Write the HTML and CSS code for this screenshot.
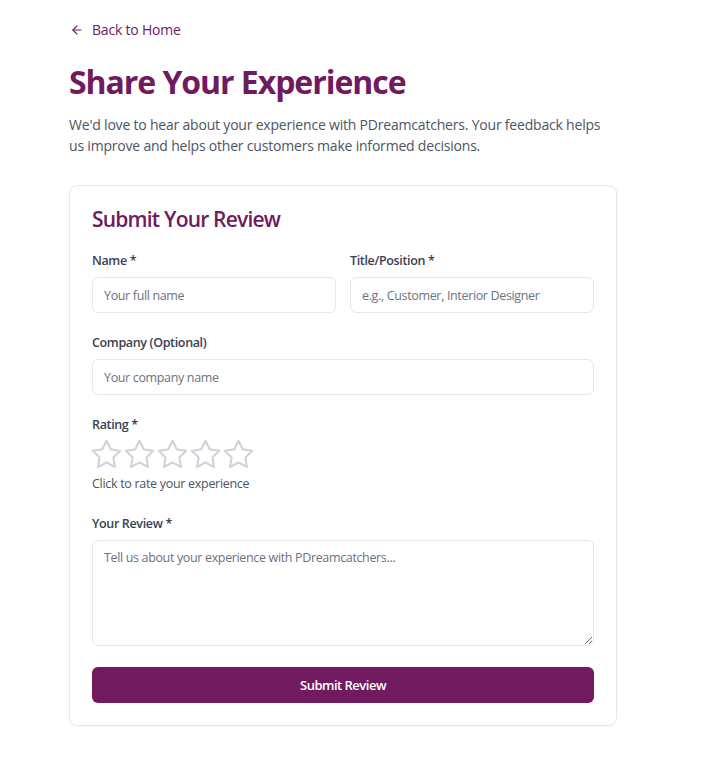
FILE: index.html
```html
<!DOCTYPE html>
<html lang="en">
<head>
<meta charset="utf-8">
<title>Share Your Experience</title>
<link rel="stylesheet" href="styles.css">
</head>
<body>
<main class="page">
  <a class="back-link" href="#">
    <svg class="back-icon" viewBox="0 0 24 24" width="14" height="14" fill="none" stroke="currentColor" stroke-width="2" stroke-linecap="round" stroke-linejoin="round"><path d="M19 12H5"/><path d="M12 19l-7-7 7-7"/></svg>
    <span>Back to Home</span>
  </a>
  <h1 class="page-title">Share Your Experience</h1>
  <p class="intro">We'd love to hear about your experience with PDreamcatchers. Your feedback helps us improve and helps other customers make informed decisions.</p>

  <section class="card">
    <h2 class="card-title">Submit Your Review</h2>
    <form class="form">
      <div class="row-2">
        <div class="field">
          <label class="label">Name *</label>
          <input class="input" type="text" placeholder="Your full name">
        </div>
        <div class="field">
          <label class="label">Title/Position *</label>
          <input class="input" type="text" placeholder="e.g., Customer, Interior Designer">
        </div>
      </div>
      <div class="field">
        <label class="label">Company (Optional)</label>
        <input class="input" type="text" placeholder="Your company name">
      </div>
      <div class="field">
        <label class="label">Rating *</label>
        <div class="stars">
          <svg class="star" viewBox="0 0 24 24"><path d="M12 2l3.09 6.26L22 9.27l-5 4.87 1.18 6.88L12 17.770l-6.18 3.25L7 14.14 2 9.27l6.91-1.01L12 2z"/></svg>
          <svg class="star" viewBox="0 0 24 24"><path d="M12 2l3.09 6.26L22 9.27l-5 4.87 1.18 6.88L12 17.77l-6.18 3.25L7 14.14 2 9.27l6.91-1.01L12 2z"/></svg>
          <svg class="star" viewBox="0 0 24 24"><path d="M12 2l3.09 6.26L22 9.27l-5 4.87 1.18 6.88L12 17.77l-6.18 3.25L7 14.14 2 9.27l6.91-1.01L12 2z"/></svg>
          <svg class="star" viewBox="0 0 24 24"><path d="M12 2l3.09 6.26L22 9.27l-5 4.87 1.18 6.88L12 17.77l-6.18 3.25L7 14.14 2 9.27l6.91-1.01L12 2z"/></svg>
          <svg class="star" viewBox="0 0 24 24"><path d="M12 2l3.09 6.26L22 9.27l-5 4.87 1.18 6.88L12 17.77l-6.18 3.25L7 14.14 2 9.27l6.91-1.01L12 2z"/></svg>
        </div>
        <p class="hint">Click to rate your experience</p>
      </div>
      <div class="field">
        <label class="label">Your Review *</label>
        <textarea class="input textarea" placeholder="Tell us about your experience with PDreamcatchers..."></textarea>
      </div>
      <button class="submit" type="button">Submit Review</button>
    </form>
  </section>
</main>
</body>
</html>
```

FILE: styles.css
```css
* { box-sizing: border-box; }
html, body { margin: 0; padding: 0; background: #ffffff; }
body {
  font-family: "Open Sans", "Noto Sans", sans-serif;
  color: #374151;
}
.page {
  padding: 20px 0 40px 69px;
  width: 617px;
}
.back-link {
  display: inline-flex;
  align-items: center;
  gap: 8px;
  color: #701a5f;
  text-decoration: none;
  font-size: 14px;
  line-height: 20px;
  height: 20px;
  letter-spacing: -0.2px;
}
.back-icon { margin-left: 1px; }
.page-title {
  margin: 18px 0 0;
  font-size: 32px;
  line-height: 44px;
  font-weight: 700;
  color: #701a5f;
  letter-spacing: -1.05px;
}
.intro {
  margin: 11px 0 0;
  font-size: 14px;
  line-height: 20.5px;
  color: #4b5563;
  letter-spacing: -0.2px;
  width: 545px;
}
.card {
  margin-top: 29px;
  width: 548px;
  border: 1px solid #e5e7eb;
  border-radius: 8px;
  padding: 17px 22px 22px;
  box-shadow: 0 1px 2px rgba(0,0,0,0.04);
}
.card-title {
  margin: 0 0 16px;
  font-size: 21px;
  line-height: 32px;
  font-weight: 600;
  color: #701a5f;
  letter-spacing: -0.8px;
}
.form {
  display: flex;
  flex-direction: column;
  gap: 20px;
}
.row-2 {
  display: grid;
  grid-template-columns: 244px 244px;
  column-gap: 14px;
}
.field { display: flex; flex-direction: column; }
.label {
  font-size: 12.5px;
  line-height: 20px;
  font-weight: 600;
  color: #374151;
  margin-bottom: 6px;
  letter-spacing: -0.35px;
}
.input {
  height: 36px;
  border: 1px solid #e2e8f0;
  border-radius: 6px;
  padding: 0 11px;
  font-family: inherit;
  font-size: 12.5px;
  color: #374151;
  background: #fff;
  outline: none;
  letter-spacing: -0.35px;
}
.input::placeholder { color: #6b7280; }
.textarea {
  height: 106px;
  padding: 7px 11px;
  line-height: 20px;
  resize: vertical;
}
.stars {
  display: flex;
  gap: 0;
  margin: -4px 0 0 -2px;
  height: 34px;
  align-items: center;
}
.star {
  width: 33px;
  height: 33px;
  fill: none;
  stroke: #d1d5db;
  stroke-width: 1.6;
  stroke-linejoin: round;
  stroke-linecap: round;
}
.hint {
  margin: 3px 0 0;
  font-size: 12.5px;
  line-height: 20px;
  color: #4b5563;
  letter-spacing: -0.3px;
}
.submit {
  margin-top: 1px;
  height: 36px;
  border: 0;
  border-radius: 6px;
  background: #721a60;
  color: #ffffff;
  font-family: inherit;
  font-size: 13px;
  font-weight: 600;
  letter-spacing: -0.5px;
  cursor: pointer;
}
```
